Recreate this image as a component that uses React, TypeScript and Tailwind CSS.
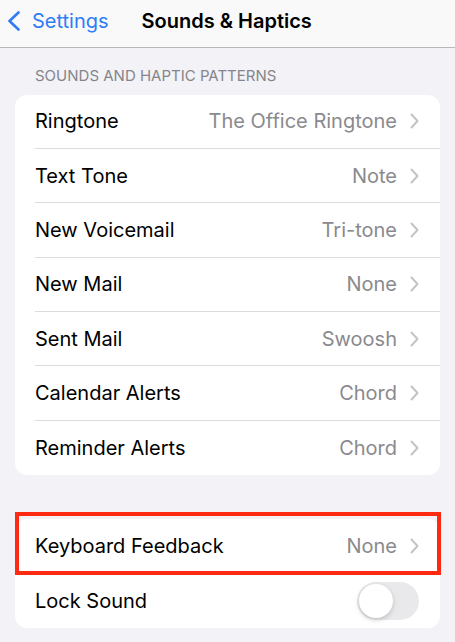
import React from "react";

const rows1: [string, string][] = [
  ["Ringtone", "The Office Ringtone"],
  ["Text Tone", "Note"],
  ["New Voicemail", "Tri-tone"],
  ["New Mail", "None"],
  ["Sent Mail", "Swoosh"],
  ["Calendar Alerts", "Chord"],
  ["Reminder Alerts", "Chord"],
];

function Chevron() {
  return (
    <svg width="9" height="16" viewBox="0 0 9 16" className="ml-[13px] shrink-0">
      <path d="M1.5 1.5 L7.5 8 L1.5 14.5" fill="none" stroke="#c4c4c7" strokeWidth="2" strokeLinecap="round" strokeLinejoin="round" />
    </svg>
  );
}

function Row({ label, value, last }: { label: string; value: string; last?: boolean }) {
  return (
    <div className="flex h-[54.4px] items-center pl-5">
      <div className={`flex h-full flex-1 items-center pr-[21px] ${last ? "" : "border-b border-[#dcdce0]"}`}>
        <span className="flex-1 text-[20px] text-black">{label}</span>
        <span className="text-[20px] text-[#8a8a8e]">{value}</span>
        <Chevron />
      </div>
    </div>
  );
}

export default function App() {
  return (
    <div className="h-[642px] w-[455px] overflow-hidden bg-[#f2f2f7]" style={{ fontFamily: "Inter, 'Noto Sans', sans-serif" }}>
      <div className="relative flex h-[48px] items-center border-b border-[#b8b8bc] bg-[#f9f9f9] pb-[6px]">
        <div className="flex items-center pl-[7px]">
          <svg width="14" height="20" viewBox="0 0 14 20">
            <path d="M11.5 1.5 L2.5 10 L11.5 18.5" fill="none" stroke="#2f7cf6" strokeWidth="2.6" strokeLinecap="round" strokeLinejoin="round" />
          </svg>
          <span className="ml-[11px] text-[20px] text-[#2f7cf6]">Settings</span>
        </div>
        <span className="ml-[33px] text-[20px] font-semibold text-black">Sounds &amp; Haptics</span>
      </div>
      <div className="px-[15px]">
        <div className="pl-5 pt-[17px] pb-[7px] text-[15px] uppercase text-[#85858a]">Sounds and Haptic Patterns</div>
        <div className="overflow-hidden rounded-[12px] bg-white">
          {rows1.map(([l, v], i) => (
            <Row key={l} label={l} value={v} last={i === rows1.length - 1} />
          ))}
        </div>
        <div className="relative mt-[44px]">
          <div className="overflow-hidden rounded-[12px] bg-white">
            <Row label="Keyboard Feedback" value="None" last />
            <div className="flex h-[54px] items-center pl-5 pr-[21px]">
              <span className="flex-1 text-[20px] text-black">Lock Sound</span>
              <div className="relative h-[38px] w-[62px] rounded-full bg-[#e9e9eb]">
                <div className="absolute left-[2px] top-[2px] h-[34px] w-[34px] rounded-full bg-white shadow-[0_2px_5px_rgba(0,0,0,0.18)]" />
              </div>
            </div>
          </div>
          <div className="absolute left-0 right-[-1px] top-[-7px] h-[63px] border-[4px] border-[#ff2a12]" />
        </div>
      </div>
    </div>
  );
}
